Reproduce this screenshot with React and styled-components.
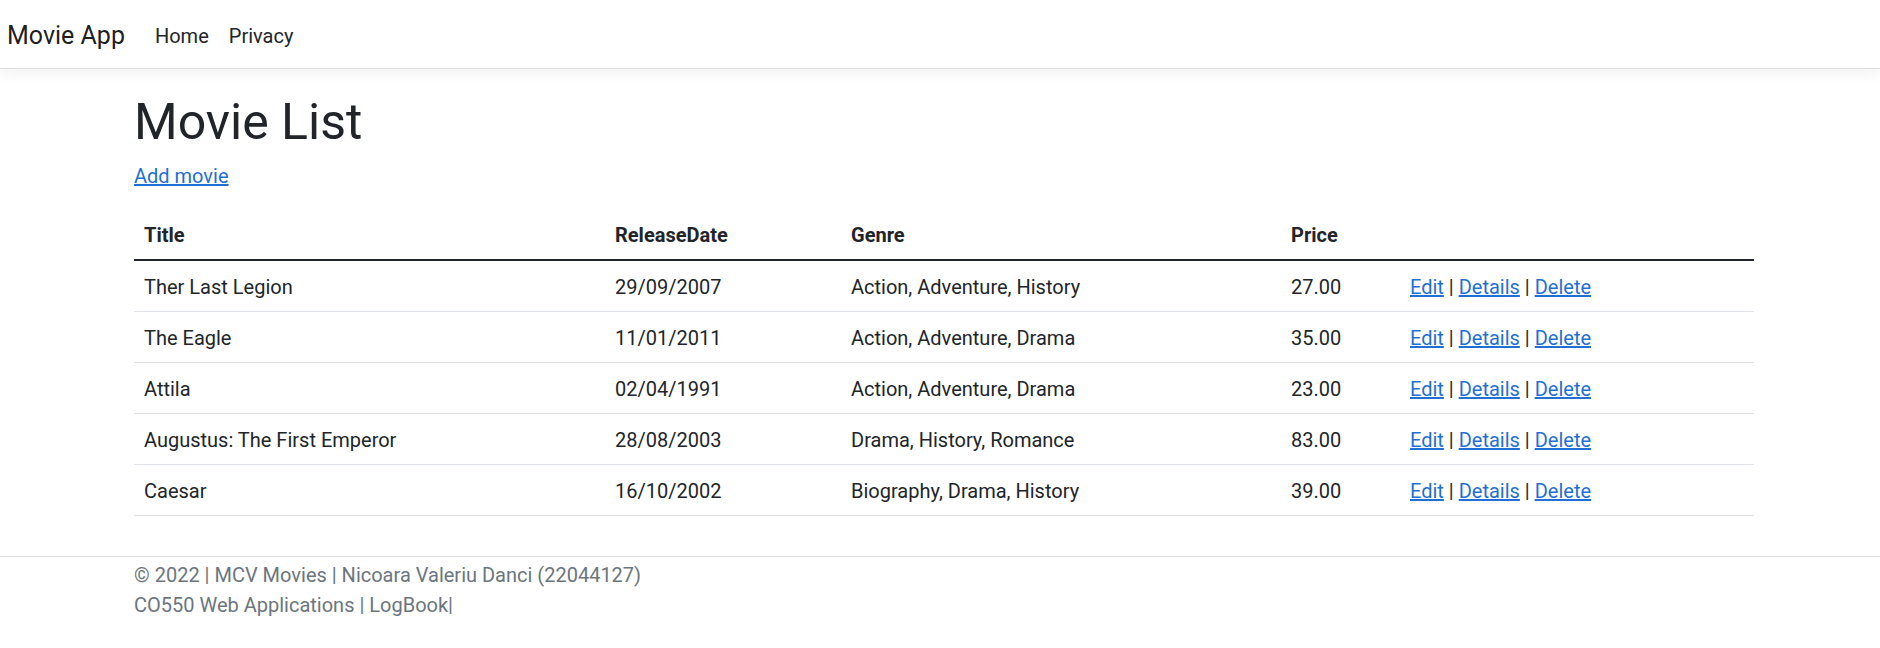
import styled, { createGlobalStyle } from "styled-components";

const GlobalStyle = createGlobalStyle`
	html, body {
		margin: 0;
		padding: 0;
		background: #fff;
	}
	body {
		font-family: "Segoe UI", Roboto, "Liberation Sans", sans-serif;
		font-size: 20px;
		line-height: 1.5;
		color: #212529;
	}
	* { box-sizing: border-box; }
`

const movies = [
	{title: "Ther Last Legion", date: "29/09/2007", genre: "Action, Adventure, History", price: "27.00"},
	{title: "The Eagle", date: "11/01/2011", genre: "Action, Adventure, Drama", price: "35.00"},
	{title: "Attila", date: "02/04/1991", genre: "Action, Adventure, Drama", price: "23.00"},
	{title: "Augustus: The First Emperor", date: "28/08/2003", genre: "Drama, History, Romance", price: "83.00"},
	{title: "Caesar", date: "16/10/2002", genre: "Biography, Drama, History", price: "39.00"},
]

const columns = [
	{label: "Title", width: 471},
	{label: "ReleaseDate", width: 236},
	{label: "Genre", width: 440},
	{label: "Price", width: 119},
	{label: "", width: 354},
]

const Navbar = styled.nav`
	height: 69px;
	display: flex;
	align-items: center;
	padding: 3px 7px 0;
	border-bottom: 1px solid #dee2e6;
	box-shadow: 0 5px 15px rgba(0, 0, 0, 0.05);
	margin-bottom: 20px;
`

const Brand = styled.a`
	font-size: 25px;
	line-height: 1.5;
	color: rgba(0, 0, 0, 0.9);
	text-decoration: none;
	margin-right: 20px;
`

const NavList = styled.div`
	display: flex;
`

const NavLink = styled.a`
	padding: 0 10px;
	color: #212529;
	text-decoration: none;
	font-size: 20px;
`

const Container = styled.div`
	width: 1620px;
	margin-left: 134px;
`

const Main = styled.main`
	padding-bottom: 20px;
`

const Heading = styled.h1`
	font-size: 50px;
	font-weight: 400;
	line-height: 1.2;
	padding-top: 3px;
	margin: 0 0 7px;
`

const Para = styled.p`
	padding-top: 2px;
	margin: 0 0 18px;
`

const Link = styled.a`
	color: #1f6fd6;
	text-decoration: underline;
	cursor: pointer;
`

const Table = styled.table`
	width: 100%;
	table-layout: fixed;
	border-collapse: collapse;
	margin-bottom: 20px;
`

const Th = styled.th`
	text-align: left;
	font-weight: 700;
	padding: 11px 10px 9px;
	height: 51px;
	border-bottom: 2px solid #212529;
`

const Td = styled.td`
	padding: 11px 10px 9px;
	height: 51px;
	border-bottom: 1px solid #dee2e6;
	white-space: nowrap;
`

const Footer = styled.footer`
	border-top: 1px solid #dee2e6;
	color: #6c757d;
	padding-top: 3px;
	white-space: nowrap;
`

const FooterLine = styled.div`
	line-height: 30px;
`

export default function App() {
	return (
		<>
			<GlobalStyle />
			<Navbar>
				<Brand>Movie App</Brand>
				<NavList>
					<NavLink>Home</NavLink>
					<NavLink>Privacy</NavLink>
				</NavList>
			</Navbar>
			<Container>
				<Main>
					<Heading>Movie List</Heading>
					<Para><Link>Add movie</Link></Para>
					<Table>
						<colgroup>
							{columns.map((c, i) => <col key={i} style={{width: c.width}} />)}
						</colgroup>
						<thead>
							<tr>
								{columns.map((c, i) => <Th key={i}>{c.label}</Th>)}
							</tr>
						</thead>
						<tbody>
							{movies.map((m, i) => (
								<tr key={i}>
									<Td>{m.title}</Td>
									<Td>{m.date}</Td>
									<Td>{m.genre}</Td>
									<Td>{m.price}</Td>
									<Td>
										<Link>Edit</Link> | <Link>Details</Link> | <Link>Delete</Link>
									</Td>
								</tr>
							))}
						</tbody>
					</Table>
				</Main>
			</Container>
			<Footer>
				<Container>
					<FooterLine>© 2022 | MCV Movies | Nicoara Valeriu Danci (22044127)</FooterLine>
					<FooterLine>CO550 Web Applications | LogBook|</FooterLine>
				</Container>
			</Footer>
		</>
	)
}
